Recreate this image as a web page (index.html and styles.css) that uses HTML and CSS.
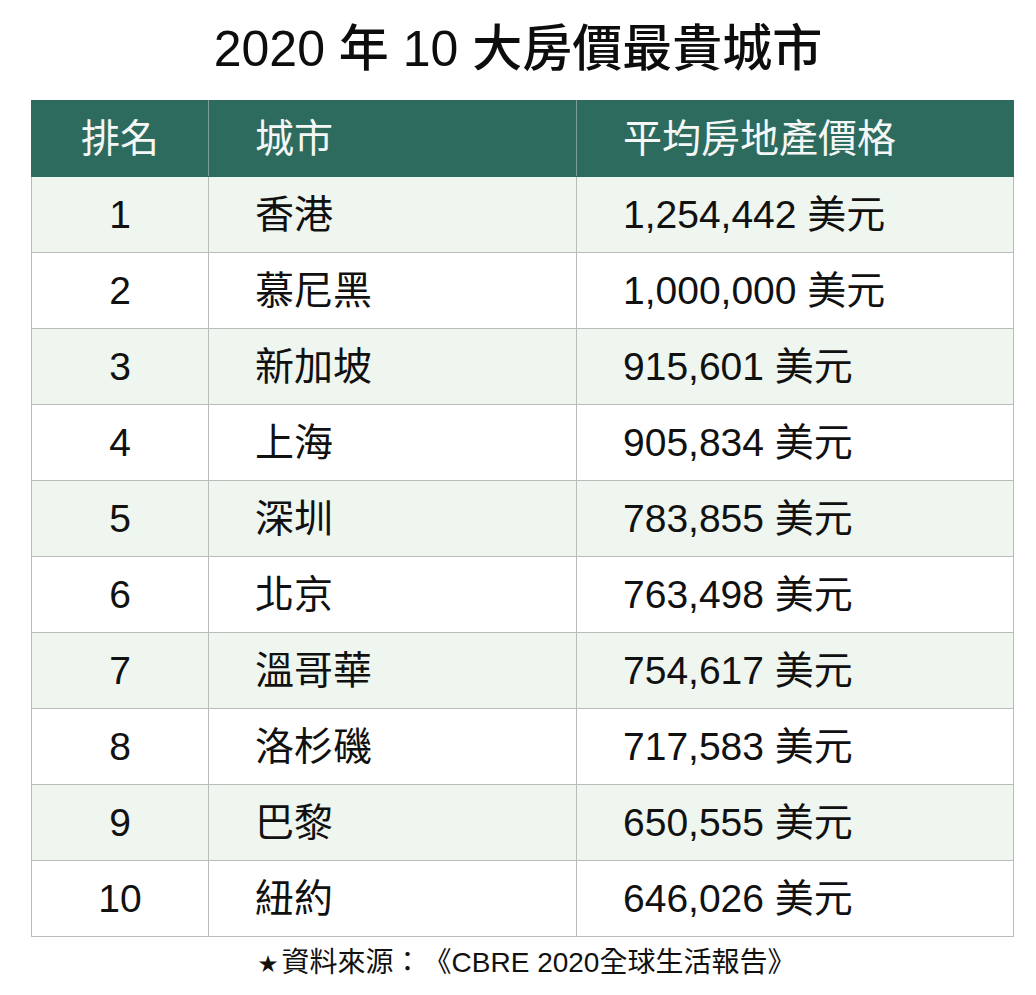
FILE: index.html
```html
<!DOCTYPE html>
<html lang="zh-Hant">
<head>
<meta charset="utf-8">
<title>2020 年 10 大房價最貴城市</title>
<link rel="stylesheet" href="styles.css">
</head>
<body>
<div class="page">
  <h1 class="title">2020 年 10 大房價最貴城市</h1>
  <table class="rank-table">
    <colgroup>
      <col class="c-rank">
      <col class="c-city">
      <col class="c-price">
    </colgroup>
    <thead>
      <tr>
        <th class="rank">排名</th>
        <th class="city">城市</th>
        <th class="price">平均房地產價格</th>
      </tr>
    </thead>
    <tbody>
      <tr><td class="rank">1</td><td class="city">香港</td><td class="price">1,254,442 美元</td></tr>
      <tr><td class="rank">2</td><td class="city">慕尼黑</td><td class="price">1,000,000 美元</td></tr>
      <tr><td class="rank">3</td><td class="city">新加坡</td><td class="price">915,601 美元</td></tr>
      <tr><td class="rank">4</td><td class="city">上海</td><td class="price">905,834 美元</td></tr>
      <tr><td class="rank">5</td><td class="city">深圳</td><td class="price">783,855 美元</td></tr>
      <tr><td class="rank">6</td><td class="city">北京</td><td class="price">763,498 美元</td></tr>
      <tr><td class="rank">7</td><td class="city">溫哥華</td><td class="price">754,617 美元</td></tr>
      <tr><td class="rank">8</td><td class="city">洛杉磯</td><td class="price">717,583 美元</td></tr>
      <tr><td class="rank">9</td><td class="city">巴黎</td><td class="price">650,555 美元</td></tr>
      <tr><td class="rank">10</td><td class="city">紐約</td><td class="price">646,026 美元</td></tr>
    </tbody>
  </table>
  <p class="source"><span class="star">★</span>資料來源：<span class="gap"></span>《CBRE 2020全球生活報告》</p>
</div>
</body>
</html>
```

FILE: styles.css
```css
html, body {
  margin: 0;
  padding: 0;
  background: #ffffff;
}

body {
  font-family: "Liberation Sans", "Noto Sans CJK TC", sans-serif;
  color: #111111;
}

.page {
  width: 1036px;
}

.title {
  margin: 0;
  height: 100px;
  line-height: 98px;
  font-size: 50px;
  font-weight: 500;
  color: #0d0d0d;
  text-align: center;
}

.rank-table {
  width: 982px;
  margin-left: 31px;
  border-collapse: collapse;
  table-layout: fixed;
}

.c-rank { width: 177px; }
.c-city { width: 368px; }
.c-price { width: 437px; }

.rank-table th,
.rank-table td {
  height: 75px;
  padding: 0;
  border: 1px solid #b9bcb9;
  font-size: 39px;
  line-height: 1;
  vertical-align: middle;
  text-align: left;
}

.rank-table th {
  background: #2e6b5f;
  color: #f4f7f5;
  font-weight: 400;
  border-color: #2e6b5f #7c9e96 #2e6b5f #7c9e96;
}

.rank-table th:first-child { border-left-color: #2e6b5f; }
.rank-table th:last-child { border-right-color: #2e6b5f; }

.rank-table td {
  color: #111111;
}

.rank-table tbody tr:nth-child(odd) td {
  background: #eff5ef;
}

.rank-table .rank {
  text-align: center;
}

.rank-table .city,
.rank-table .price {
  padding-left: 46px;
}

.source {
  margin: 0;
  padding: 8px 0 0 18px;
  font-size: 28px;
  line-height: 36px;
  color: #111111;
  text-align: center;
}

.star {
  font-size: 19px;
  margin-right: 4px;
  vertical-align: 1px;
}

.gap {
  display: inline-block;
  width: 2px;
}
```
